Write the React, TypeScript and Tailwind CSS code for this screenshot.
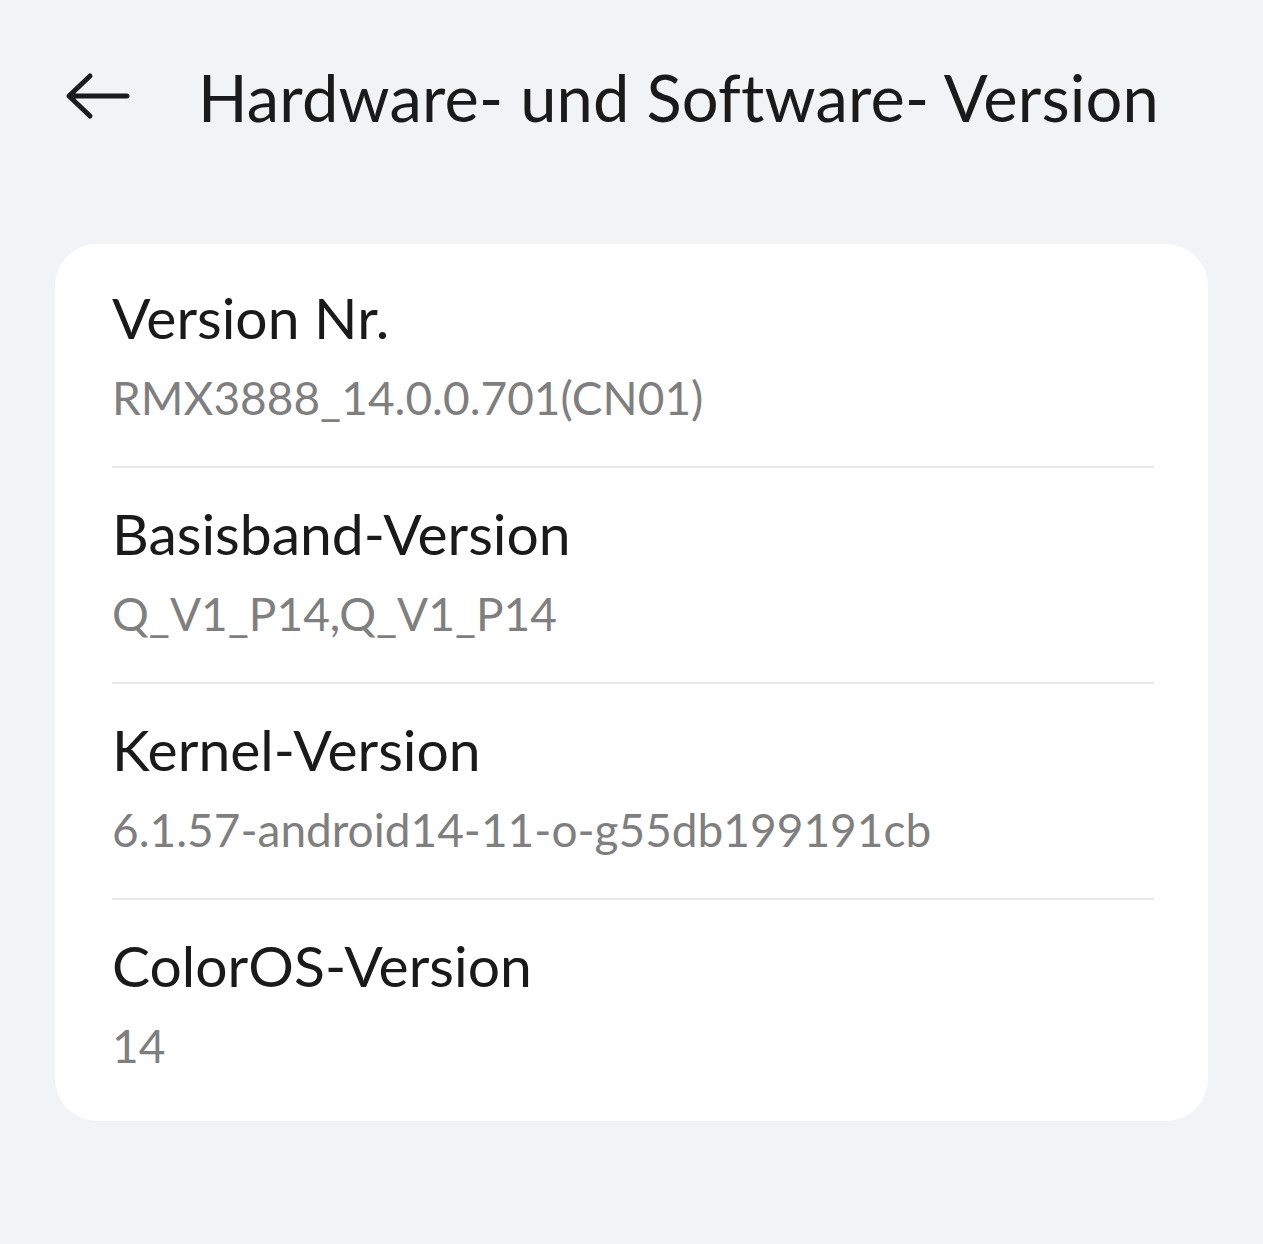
import React from "react";

const rows = [
  { title: "Version Nr.", value: "RMX3888_14.0.0.701(CN01)" },
  { title: "Basisband-Version", value: "Q_V1_P14,Q_V1_P14" },
  { title: "Kernel-Version", value: "6.1.57-android14-11-o-g55db199191cb" },
  { title: "ColorOS-Version", value: "14" },
];

export default function App() {
  return (
    <div
      className="w-[1263px] h-[1244px] bg-[#f2f3f5] text-[#1a1a1a]"
      style={{ fontFamily: "Lato, 'Noto Sans', sans-serif" }}
    >
      <div className="flex items-center h-[196px] pl-[64px] pb-[2px]">
        <svg width="66" height="50" viewBox="0 0 66 50" className="shrink-0">
          <path d="M63 24H6M26 4L5 24l21 20" fill="none" stroke="#1a1a1a" strokeWidth="5" strokeLinecap="round" strokeLinejoin="round" />
        </svg>
        <div className="ml-[68px] text-[65px] leading-none tracking-[0.2px]">Hardware- und Software- Version</div>
      </div>
      <div className="mx-[55px] mt-[48px] bg-white rounded-[42px] pl-[57px] pr-[54px] pt-[8px] pb-[7px]">
        {rows.map((r, i) => (
          <div key={i} className={i < rows.length - 1 ? "border-b-2 border-[#e6e6e6]" : ""}>
            <div className="h-[214px] pt-[32px]">
              <div className="text-[57px] leading-[66px]">{r.title}</div>
              <div className="text-[46px] leading-[62px] text-[#7f7f7f] mt-[17px]">{r.value}</div>
            </div>
          </div>
        ))}
      </div>
    </div>
  );
}
